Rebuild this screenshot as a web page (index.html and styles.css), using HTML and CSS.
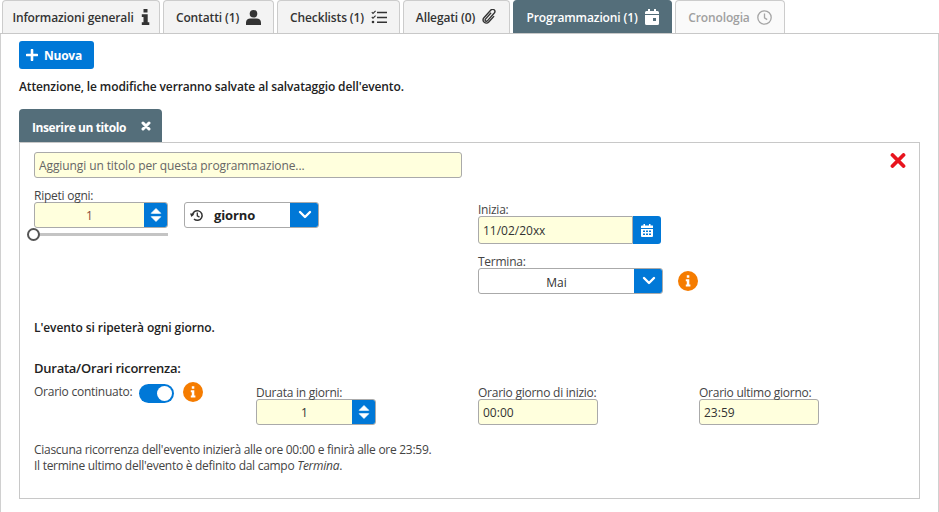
FILE: index.html
```html
<!DOCTYPE html>
<html lang="it">
<head>
<meta charset="utf-8">
<title>Programmazioni</title>
<link rel="stylesheet" href="styles.css">
</head>
<body>
<svg class="defs" width="0" height="0" aria-hidden="true">
  <symbol id="chev" viewBox="0 0 14 10"><path d="M2 2l5 5 5-5" fill="none" stroke="#fff" stroke-width="2.4" stroke-linecap="round" stroke-linejoin="round"/></symbol>
  <symbol id="spin" viewBox="0 0 14 18"><path d="M7 1.500l5.500 5.500h-11zM1.500 11h11L7 16.500z" fill="#fff" stroke="#fff" stroke-linejoin="round"/></symbol>
  <symbol id="info" viewBox="0 0 20 20"><circle cx="10" cy="10" r="10" fill="#f57c00"/><path d="M8.800 4.300h2.500v2.500H8.800zM7.800 8.300h3.500v5.300h1.100v1.900H7.800v-1.900h1v-3.400h-1z" fill="#fff"/></symbol>
</svg>
<div class="page">
  <nav class="tabs">
    <a class="tab t1">Informazioni generali
      <svg class="ti" width="9" height="16" viewBox="0 0 9 16"><path d="M2.500 0h4v3.400h-4zM.8 5.200h5.900v8h1.600V16H.8v-2.800h1.700V8H.8z" fill="#333"/></svg></a>
    <a class="tab t2">Contatti (1)
      <svg class="ti" width="15" height="15" viewBox="0 0 15 15"><circle cx="7.500" cy="3.800" r="3.800" fill="#333"/><path d="M0 15v-2.500C0 10 2 8.500 4.200 8.500h6.600C13 8.500 15 10 15 12.500V15z" fill="#333"/></svg></a>
    <a class="tab t3">Checklists (1)
      <svg class="ti" width="16" height="14" viewBox="0 0 16 14"><path d="M.8 2.200l1.200 1.200L4.600.8M.8 7l1.200 1.200 2.600-2.600" fill="none" stroke="#333" stroke-width="1.100"/><circle cx="2" cy="12" r="1.300" fill="#333"/><path d="M6 2.500h10M6 7.500h10M6 12.300h10" stroke="#333" stroke-width="1.500"/></svg></a>
    <a class="tab t4">Allegati (0)
      <svg class="ti" width="15" height="16" viewBox="0 0 14 15"><path d="M8.500 3.500l-5.300 6c-1 1.200 .7 2.700 1.800 1.600l6.500-7.300c1.800-2.200-1.200-4.900-3.200-2.800L1.800 8.200c-2.500 3 1.800 7 4.500 4l5-5.500" fill="none" stroke="#333" stroke-width="1.300"/></svg></a>
    <a class="tab active t5">Programmazioni (1)
      <svg class="ti" width="14" height="16" viewBox="0 0 14 16"><path d="M3 0h2v2h4V0h2v2h1.500A1.500 1.500 0 0 1 14 3.500V5H0V3.500A1.500 1.500 0 0 1 1.500 2H3zM0 6h14v8.500a1.500 1.500 0 0 1-1.500 1.500h-11A1.500 1.500 0 0 1 0 14.500z M8 9v3h3V9z" fill="#fff" fill-rule="evenodd"/></svg></a>
    <a class="tab disabled t6">Cronologia
      <svg class="ti" width="15" height="15" viewBox="0 0 15 15"><circle cx="7.500" cy="7.500" r="6.700" fill="none" stroke="#a6a6a6" stroke-width="1.300"/><path d="M7.500 3.500v4.300l2.700 1.800" fill="none" stroke="#a6a6a6" stroke-width="1.300"/></svg></a>
  </nav>

  <main class="content">
    <button class="new-btn" type="button">
      <svg width="12" height="12" viewBox="0 0 12 12"><path d="M6 1v10M1 6h10" stroke="#fff" stroke-width="2.600" stroke-linecap="round"/></svg>
      Nuova
    </button>
    <p class="notice">Attenzione, le modifiche verranno salvate al salvataggio dell'evento.</p>

    <div class="subtab">Inserire un titolo
      <svg class="subtab-x" width="10" height="10" viewBox="0 0 10 10"><path d="M2 2l6 6M8 2L2 8" stroke="#fff" stroke-width="3" stroke-linecap="round"/></svg>
    </div>

    <section class="panel">
      <svg class="remove" width="16" height="15" viewBox="0 0 16 15"><path d="M2.500 2l11 11M13.500 2l-11 11" stroke="#e8141e" stroke-width="3.800" stroke-linecap="round"/></svg>

      <input class="field title" type="text" placeholder="Aggiungi un titolo per questa programmazione...">

      <div class="grid top">
        <div class="cell repeat">
          <div class="repeat-num">
            <label class="lbl">Ripeti ogni:</label>
            <div class="ctl spinner w134">
              <span class="num red">1</span>
              <span class="side"><svg width="12" height="16"><use href="#spin"/></svg></span>
            </div>
            <div class="slider"><span class="knob"></span></div>
          </div>
          <div class="ctl select w135 giorno">
            <svg class="hist" width="14" height="13" viewBox="0 0 14 13"><path d="M2.500 6.500a4.800 4.800 0 1 1 1.500 3.500" fill="none" stroke="#333" stroke-width="1.500"/><path d="M0 4.500h4.500L1.500 8z" fill="#333"/><path d="M7.300 3.500v3.300l2.200 1.300" fill="none" stroke="#333" stroke-width="1.300"/></svg>
            <span class="val bold">giorno</span>
            <span class="side chev"><svg width="14" height="10"><use href="#chev"/></svg></span>
          </div>
        </div>
        <div class="cell dates">
          <label class="lbl">Inizia:</label>
          <div class="date-row">
            <span class="field date">11/02/20<span class="xx">xx</span></span>
            <span class="cal"><svg width="12" height="13" viewBox="0 0 12 13"><path d="M2.500 0h1.500v1.500h4V0h1.500v1.500h1A1 1 0 0 1 12 2.500V4H0V2.500a1 1 0 0 1 1-1h1.500zM0 5h12v7a1 1 0 0 1-1 1H1a1 1 0 0 1-1-1z M2 6.500v1.500h2V6.500zM5 6.500v1.500h2V6.500zM8 6.500v1.500h2V6.500zM2 9.500v1.500h2V9.500zM5 9.500v1.500h2V9.500zM8 9.500v1.500h2V9.500z" fill="#fff" fill-rule="evenodd"/></svg></span>
          </div>
          <label class="lbl gap">Termina:</label>
          <div class="end-row">
            <div class="ctl select w185">
              <span class="val center">Mai</span>
              <span class="side chev"><svg width="14" height="10"><use href="#chev"/></svg></span>
            </div>
            <svg class="info end-info" width="20" height="20"><use href="#info"/></svg>
          </div>
        </div>
      </div>

      <p class="summary">L'evento si ripeterà ogni giorno.</p>
      <h3 class="heading">Durata/Orari ricorrenza:</h3>

      <div class="grid hours">
        <div class="cell cont">
          <span class="lbl">Orario continuato:</span>
          <span class="toggle"><span class="dot"></span></span>
          <svg class="info" width="20" height="20"><use href="#info"/></svg>
        </div>
        <div class="cell">
          <label class="lbl">Durata in giorni:</label>
          <div class="ctl spinner w120">
            <span class="num">1</span>
            <span class="side"><svg width="12" height="16"><use href="#spin"/></svg></span>
          </div>
        </div>
        <div class="cell">
          <label class="lbl">Orario giorno di inizio:</label>
          <span class="field time">00:00</span>
        </div>
        <div class="cell">
          <label class="lbl">Orario ultimo giorno:</label>
          <span class="field time">23:59</span>
        </div>
      </div>

      <p class="foot">Ciascuna ricorrenza dell'evento inizierà alle ore 00:00 e finirà alle ore 23:59.<br>Il termine ultimo dell'evento è definito dal campo <em>Termina</em>.</p>
    </section>
  </main>
</div>
</body>
</html>
```
FILE: styles.css
```css
* { box-sizing: border-box; }
html, body { margin: 0; padding: 0; background: #fff; }
body { width: 939px; height: 512px; overflow: hidden; font-family: "Open Sans", "Noto Sans", sans-serif; font-size: 12px; color: #333; }
.defs { position: absolute; }
.page { width: 939px; height: 512px; }

.tabs { display: flex; height: 34px; border-bottom: 1px solid #c8c8c8; padding-left: 2px; }
.tab { display: flex; align-items: center; justify-content: center; gap: 7px; height: 33px; background: #f3f3f3; border: 1px solid #ccc; border-bottom: 0; border-radius: 4px 4px 0 0; font-weight: 600; font-size: 12px; letter-spacing: -.13px; white-space: nowrap; }
.t1 { width: 158px; margin-right: 3px; }
.t2 { width: 111px; margin-right: 3px; }
.t3 { width: 123px; margin-right: 3px; }
.t4 { width: 107px; margin-right: 3px; }
.t5 { width: 159px; margin-right: 3px; }
.t6 { width: 110px; }
.tab.active { background: #546e7a; border-color: #546e7a; color: #fff; }
.tab.disabled { background: #fafafa; color: #a0a0a0; }

.content { height: 478px; padding: 7px 18px 0; border-left: 1px solid #d0d0d0; border-right: 1px solid #d0d0d0; }
.new-btn { display: flex; align-items: center; gap: 6px; width: 75px; height: 28px; padding: 0 0 0 7px; border: 0; border-radius: 3px; background: #0078d7; color: #fff; font: 700 12px "Open Sans", sans-serif; letter-spacing: -.25px; }
.notice { margin: 9px 0 0; height: 17px; line-height: 17px; font-weight: 600; font-size: 12px; letter-spacing: -.12px; color: #222; }

.subtab { display: flex; align-items: center; justify-content: space-between; width: 143px; height: 34px; margin-top: 14px; padding: 2px 11px 0 13px; background: #546e7a; border-radius: 4px 4px 0 0; color: #fff; font-weight: 700; font-size: 12px; letter-spacing: -.4px; }
.subtab-x { margin-top: -2px; }

.panel { position: relative; width: 901px; height: 357px; margin-top: -1px; padding: 9px 14px 0; border: 1px solid #c8c8c8; background: #fff; }
.remove { position: absolute; top: 10px; right: 13px; }

.field { display: block; height: 26px; background: #ffd; border: 1px solid #aaa; border-radius: 3px; font: 12px "Open Sans", sans-serif; color: #333; }
.title { width: 428px; padding: 0 4px; outline: 0; letter-spacing: -.1px; }
.title::placeholder { color: #666; opacity: 1; }

.grid { display: grid; grid-template-columns: 222px 222px 221px 1fr; }
.lbl { display: block; font-size: 12px; line-height: 14px; letter-spacing: -.25px; color: #444; }

.top { margin-top: 9px; }
.repeat { grid-column: span 2; display: flex; align-items: flex-start; gap: 16px; height: 107px; }
.repeat-num .lbl { height: 15px; line-height: 17px; }
.dates { grid-column: span 2; padding-top: 15px; height: 107px; }
.dates .lbl { line-height: 16px; height: 14px; }
.date-row { display: flex; height: 28px; }
.date { width: 155px; height: 28px; line-height: 27px; padding-left: 4px; border-radius: 3px 0 0 3px; font-size: 12px; }
.xx { letter-spacing: -.3px; }
.cal { display: flex; align-items: center; justify-content: center; width: 28px; height: 28px; background: #0078d7; border-radius: 0 3px 3px 0; }
.gap { margin-top: 10px; }
.end-row { display: flex; align-items: center; gap: 15px; }

.ctl { display: flex; height: 26px; border: 1px solid #aaa; border-radius: 3px; overflow: hidden; background: #fff; }
.spinner { background: #ffd; }
.w134 { width: 134px; }
.w135 { width: 135px; }
.w120 { width: 120px; }
.w185 { width: 185px; }
.num { flex: 1; line-height: 26px; text-align: center; }
.red { color: #8a4a3a; }
.side { display: flex; align-items: center; justify-content: center; width: 24px; margin: -1px -1px -1px 0; background: #0078d7; flex: none; }
.chev { width: 29px; }
.giorno { margin-top: 15px; align-items: center; }
.hist { margin-left: 5px; flex: none; }
.val { flex: 1; line-height: 26px; }
.center { line-height: 27px; text-align: center; }
.bold { font-weight: 700; font-size: 13px; padding-left: 10px; color: #222; letter-spacing: -.1px; }
.select .side { align-self: stretch; }

.slider { position: relative; height: 3px; margin-top: 5px; background: #c4c4c4; }
.knob { position: absolute; left: -7px; top: -5px; width: 13px; height: 13px; border: 2px solid #555; border-radius: 50%; background: #fff; }

.summary { margin: 25px 0 0; height: 17px; line-height: 17px; font-weight: 600; font-size: 12px; letter-spacing: -.08px; color: #222; }
.heading { margin: 23px 0 0; height: 18px; line-height: 18px; font-size: 13px; font-weight: 600; letter-spacing: -.25px; color: #222; }

.hours { margin-top: 7px; }
.hours .lbl { height: 15px; line-height: 18px; }
.cont { display: flex; align-items: flex-start; gap: 7px; }
.cont .lbl { height: 15px; line-height: 16px; }
.toggle { position: relative; display: block; width: 35px; height: 19px; border-radius: 10px; background: #0078d7; flex: none; }
.dot { position: absolute; right: 2px; top: 2px; width: 15px; height: 15px; border-radius: 50%; background: #fff; }
.cont .info { margin: -2px 0 0 2px; }
.time { width: 120px; line-height: 26px; padding-left: 4px; }

.foot { margin: 17px 0 0; font-size: 12px; line-height: 16px; letter-spacing: -.28px; color: #444; }
```
